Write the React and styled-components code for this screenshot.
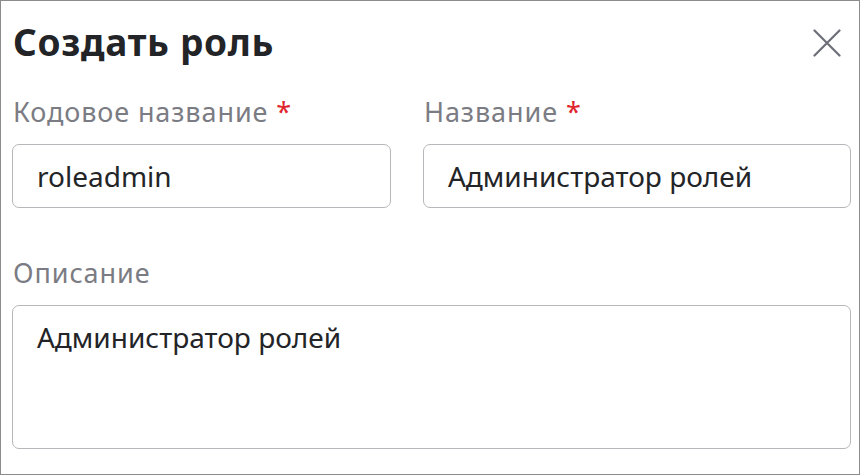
import React from "react";
import styled, { createGlobalStyle } from "styled-components";

const GlobalStyle = createGlobalStyle`
  html, body {
    margin: 0;
    padding: 0;
    background: #fff;
  }
  * {
    box-sizing: border-box;
  }
`;

const Dialog = styled.div`
  width: 860px;
  height: 475px;
  border: 1px solid #8c8c8c;
  background: #fff;
  padding: 19px 8px 0 11px;
  font-family: "Noto Sans", "Open Sans", sans-serif;
  display: flex;
  flex-direction: column;
`;

const Header = styled.div`
  display: flex;
  justify-content: space-between;
  align-items: center;
  height: 44px;
`;

const Title = styled.h1`
  margin: 0 0 0 1px;
  font-size: 37px;
  line-height: 44px;
  letter-spacing: 0.7px;
  font-weight: 700;
  color: #232427;
`;

const CloseButton = styled.button`
  border: none;
  background: none;
  padding: 0;
  width: 30px;
  height: 30px;
  margin-right: 9px;
  margin-top: 2px;
  display: flex;
  align-items: center;
  justify-content: center;
  cursor: pointer;
`;

const Row = styled.div`
  display: grid;
  grid-template-columns: 379px 1fr;
  column-gap: 32px;
  margin-top: 32px;
`;

const Field = styled.div`
  display: flex;
  flex-direction: column;
  gap: 16px;
  margin-top: ${(p) => p.$offset || 0}px;
`;

const Label = styled.label`
  font-size: 27px;
  line-height: 32px;
  letter-spacing: 0.9px;
  color: #7b7c83;
  padding-left: 1px;
`;

const Required = styled.span`
  color: #e0242b;
  margin-left: 8px;
`;

const Input = styled.div`
  height: 64px;
  border: 1px solid #b7b7bb;
  border-radius: 7px;
  padding: 0 24px;
  display: flex;
  align-items: center;
  font-size: 28px;
  color: #232427;
`;

const TextArea = styled.div`
  height: 144px;
  border: 1px solid #b7b7bb;
  border-radius: 7px;
  padding: 12px 24px;
  font-size: 28px;
  line-height: 38px;
  color: #232427;
`;

export default function App() {
  return (
    <>
      <GlobalStyle />
      <Dialog>
        <Header>
          <Title>Создать роль</Title>
          <CloseButton aria-label="Закрыть">
            <svg width="28" height="28" viewBox="0 0 28 28">
              <path
                d="M1.5 1.5 L26.5 26.5 M26.5 1.5 L1.5 26.5"
                stroke="#6c6f78"
                strokeWidth="2.2"
                strokeLinecap="round"
              />
            </svg>
          </CloseButton>
        </Header>
        <Row>
          <Field>
            <Label>
              Кодовое название<Required>*</Required>
            </Label>
            <Input>roleadmin</Input>
          </Field>
          <Field>
            <Label>
              Название<Required>*</Required>
            </Label>
            <Input>Администратор ролей</Input>
          </Field>
        </Row>
        <Field $offset={49}>
          <Label>Описание</Label>
          <TextArea>Администратор ролей</TextArea>
        </Field>
      </Dialog>
    </>
  );
}
